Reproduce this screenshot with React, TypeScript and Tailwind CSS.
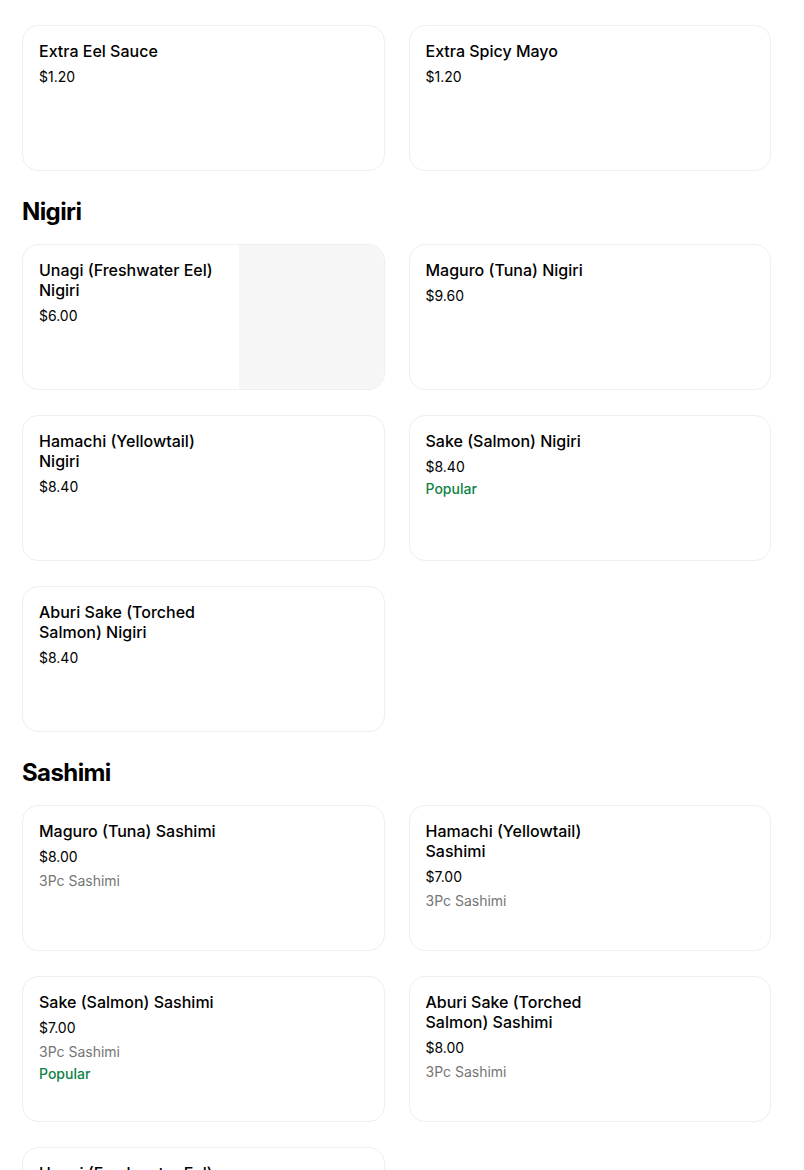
type Item = {
  name: string;
  price: string;
  desc?: string;
  popular?: boolean;
  image?: boolean;
};

const sections: { title?: string; items: Item[] }[] = [
  {
    items: [
      { name: "Extra Eel Sauce", price: "$1.20" },
      { name: "Extra Spicy Mayo", price: "$1.20" },
    ],
  },
  {
    title: "Nigiri",
    items: [
      { name: "Unagi (Freshwater Eel) Nigiri", price: "$6.00", image: true },
      { name: "Maguro (Tuna) Nigiri", price: "$9.60" },
      { name: "Hamachi (Yellowtail) Nigiri", price: "$8.40" },
      { name: "Sake (Salmon) Nigiri", price: "$8.40", popular: true },
      { name: "Aburi Sake (Torched Salmon) Nigiri", price: "$8.40" },
    ],
  },
  {
    title: "Sashimi",
    items: [
      { name: "Maguro (Tuna) Sashimi", price: "$8.00", desc: "3Pc Sashimi" },
      { name: "Hamachi (Yellowtail) Sashimi", price: "$7.00", desc: "3Pc Sashimi" },
      { name: "Sake (Salmon) Sashimi", price: "$7.00", desc: "3Pc Sashimi", popular: true },
      { name: "Aburi Sake (Torched Salmon) Sashimi", price: "$8.00", desc: "3Pc Sashimi" },
      { name: "Unagi (Freshwater Eel) Sashimi", price: "$9.00", desc: "3Pc Sashimi" },
    ],
  },
];

function MenuCard({ item }: { item: Item }) {
  return (
    <div className="flex h-[146px] overflow-hidden rounded-2xl border border-[#efefef] bg-white">
      <div className="flex-1 px-4 pt-[15px]">
        <div className="w-[184px] text-[16px] leading-5 font-medium text-black">{item.name}</div>
        <div className="mt-[6px] text-[14px] leading-5 text-black">{item.price}</div>
        {item.desc && <div className="mt-1 text-[14px] leading-5 text-[#757575]">{item.desc}</div>}
        {item.popular && <div className="mt-[2px] text-[14px] leading-5 font-medium text-[#0e8345]">Popular</div>}
      </div>
      {item.image && <div className="w-[147px] shrink-0 bg-[#f6f6f6]" />}
    </div>
  );
}

export default function App() {
  return (
    <div className="h-[1170px] overflow-hidden bg-white" style={{ fontFamily: "Inter, 'Liberation Sans', sans-serif" }}>
      <div className="mt-[-146px] pl-[22px] pr-[33px]">
        {/* tail of the previous row, scrolled out of view */}
        <div className="mb-[25px] grid grid-cols-2 gap-x-6">
          <div className="h-[146px] rounded-2xl border border-[#efefef]" />
          <div className="h-[146px] rounded-2xl border border-[#efefef]" />
        </div>
        {sections.map((s, i) => (
          <div key={i} className={s.title ? "mt-[25px]" : ""}>
            {s.title && (
              <h2 className="mb-4 text-[24px] leading-8 font-bold tracking-[-0.6px] text-black">{s.title}</h2>
            )}
            <div className="grid grid-cols-2 gap-x-6 gap-y-[25px]">
              {s.items.map((it, j) => (
                <MenuCard key={j} item={it} />
              ))}
            </div>
          </div>
        ))}
      </div>
    </div>
  );
}
